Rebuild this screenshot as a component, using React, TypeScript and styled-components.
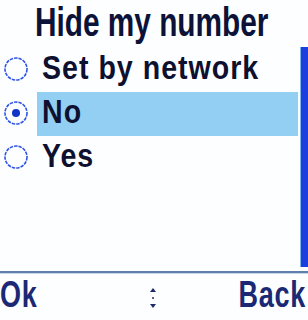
import styled, { createGlobalStyle } from "styled-components";

const GlobalStyle = createGlobalStyle`
  html, body {
    margin: 0;
    padding: 0;
    background: #ffffff;
  }
`;

const Screen = styled.div`
  width: 308px;
  height: 320px;
  display: flex;
  flex-direction: column;
  background: #fdfeff;
  font-family: "Liberation Sans", Arial, sans-serif;
  font-weight: bold;
  white-space: nowrap;
  overflow: hidden;
`;

// the phone font is very condensed, so the glyphs get squeezed horizontally
const Squeeze = styled.span<{ $k: number; $origin?: string }>`
  display: inline-block;
  transform: scaleX(${(p) => p.$k});
  transform-origin: ${(p) => p.$origin || "left"} center;
`;

const Title = styled.div`
  height: 46px;
  display: flex;
  align-items: center;
  justify-content: center;
  padding-right: 5px;
  padding-bottom: 2px;
  box-sizing: border-box;
  font-size: 40px;
  color: #0c1238;
`;

const Body = styled.div`
  flex: 1;
  display: flex;
`;

const List = styled.div`
  flex: 1;
  min-width: 0;
  padding-top: 2px;
  padding-right: 2px;
`;

const Row = styled.div`
  height: 44px;
  display: flex;
  align-items: stretch;
`;

const RadioCell = styled.div`
  width: 37px;
  flex-shrink: 0;
  display: flex;
  align-items: center;
  justify-content: center;
  padding-bottom: 3px;
  padding-right: 5px;
  box-sizing: border-box;
`;

const Label = styled.div<{ $active?: boolean }>`
  flex: 1;
  min-width: 0;
  display: flex;
  align-items: center;
  padding-left: 5px;
  padding-bottom: 6px;
  box-sizing: border-box;
  font-size: 34px;
  letter-spacing: 1.2px;
  color: #0e1030;
  background: ${(p) => (p.$active ? "#93cff3" : "transparent")};
`;

const Scrollbar = styled.div`
  width: 8px;
  flex-shrink: 0;
  margin-top: 1px;
  margin-bottom: 4px;
  background: #1e3fe0;
  border-left: 1px solid #7fb6f2;
  box-sizing: border-box;
`;

const Separator = styled.div`
  height: 2px;
  background: #5f80aa;
  border-bottom: 1px solid #c9d6e6;
`;

const SoftKeys = styled.div`
  flex: 0 0 43px;
  display: flex;
  align-items: center;
  justify-content: space-between;
  padding-bottom: 4px;
  box-sizing: border-box;
  font-size: 36px;
  color: #1b2874;
`;

const Key = styled.div<{ $right?: boolean }>`
  width: 110px;
  display: flex;
  justify-content: ${(p) => (p.$right ? "flex-end" : "flex-start")};
  padding-right: ${(p) => (p.$right ? "2px" : "0")};
  letter-spacing: 1px;
`;

const ScrollHint = styled.div`
  display: flex;
  justify-content: center;
  padding-top: 6px;
`;

function Radio({ checked }: { checked?: boolean }) {
  return (
    <svg width="26" height="26" viewBox="0 0 26 26">
      <circle
        cx="13"
        cy="13"
        r="11"
        fill="none"
        stroke="#2f55e6"
        strokeWidth="1.6"
        strokeDasharray="3.5 1"
      />
      {checked && <circle cx="13" cy="13" r="4" fill="#1234c8" />}
    </svg>
  );
}

const options = ["Set by network", "No", "Yes"];

export default function App() {
  const selected = 1;
  return (
    <>
      <GlobalStyle />
      <Screen>
        <Title>
          <Squeeze $k={0.745} $origin="center">Hide my number</Squeeze>
        </Title>
        <Body>
          <List>
            {options.map((opt, i) => (
              <Row key={opt}>
                <RadioCell>
                  <Radio checked={i === selected} />
                </RadioCell>
                <Label $active={i === selected}>
                  <Squeeze $k={0.84}>{opt}</Squeeze>
                </Label>
              </Row>
            ))}
          </List>
          <Scrollbar />
        </Body>
        <Separator />
        <SoftKeys>
          <Key>
            <Squeeze $k={0.75}>Ok</Squeeze>
          </Key>
          <ScrollHint>
            <svg width="8" height="26" viewBox="0 0 8 26">
              <path d="M4 3 L7 7 L1 7 Z" fill="#1b2a6a" />
              <rect x="3" y="12" width="2" height="2" fill="#56648a" />
              <path d="M1 19 L7 19 L4 23 Z" fill="#1b2a6a" />
            </svg>
          </ScrollHint>
          <Key $right>
            <Squeeze $k={0.75} $origin="right">Back</Squeeze>
          </Key>
        </SoftKeys>
      </Screen>
    </>
  );
}
